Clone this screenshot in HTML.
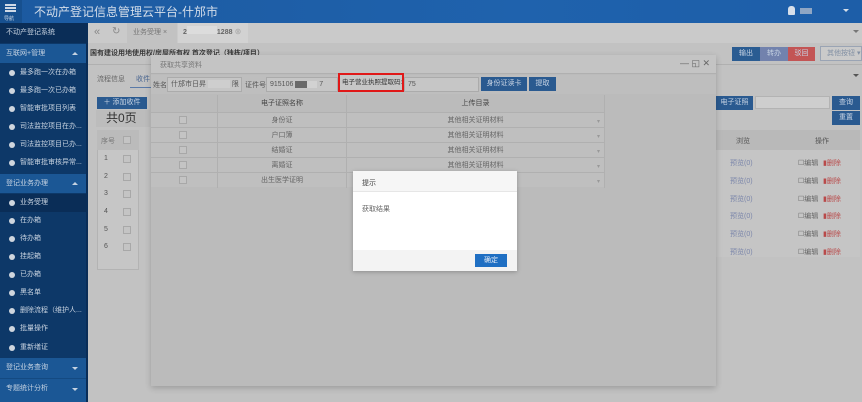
<!DOCTYPE html>
<html><head><meta charset="utf-8"><style>
*{margin:0;padding:0;box-sizing:border-box}
body{width:862px;height:402px;overflow:hidden;position:relative;background:#c2c2c2;font-family:"Liberation Sans","Noto Sans CJK SC",sans-serif;font-size:7px;color:#555}
.a{position:absolute;white-space:nowrap}
.side .it{position:absolute;left:0;width:86px;height:18px;line-height:18px;color:#c8d3e0;font-size:7px;padding-left:20px;white-space:nowrap;overflow:hidden}
.side .it:before{content:"";position:absolute;left:9px;top:6px;width:6px;height:6px;border-radius:50%;background:#cfd6de}
.side .grp{position:absolute;left:0;width:86px;height:19px;line-height:19px;background:#1b5795;color:#c6d3e2;padding-left:6px;font-size:7px}
.side .grp:after{content:"";position:absolute;right:8px;top:8px;border:3px solid transparent;border-bottom-color:#c6d3e2;border-top:0}
.side .grp.dn:after{border-bottom:0;border-top:3px solid #c6d3e2;top:9px}
.cell{position:absolute;border-right:1px solid #b0b0b0;border-bottom:1px solid #b0b0b0;text-align:center;line-height:15px;color:#666}
.cb{position:absolute;width:8px;height:8px;border:1px solid #a8a8a8;background:#c4c4c4}
.btn{position:absolute;color:#c8d4e4;text-align:center;font-size:7px;white-space:nowrap}
</style></head><body>
<div class="a" style="left:0;top:0;width:862px;height:23px;background:linear-gradient(90deg,#1c5aa0,#1f62ad 60%,#1d5ea8)"></div>
<div class="a" style="left:0;top:0;width:22px;height:23px;background:#17508f"></div>
<div class="a" style="left:5px;top:4px;width:11px;height:2px;background:#cfd9e6;box-shadow:0 3px 0 #cfd9e6,0 6px 0 #cfd9e6"></div>
<div class="a" style="left:4px;top:15px;font-size:5px;color:#cfd9e6">导航</div>
<div class="a" style="left:34px;top:3px;font-size:12px;color:#d5deea">不动产登记信息管理云平台-什邡市</div>
<div class="a" style="left:788px;top:6px;width:7px;height:9px;background:#d6dfea;border-radius:3px 3px 1px 1px"></div>
<div class="a" style="left:800px;top:8px;width:12px;height:6px;background:#8fa6c4"></div>
<div class="a" style="left:843px;top:9px;border:3px solid transparent;border-top-color:#d6dfea"></div>
<div class="side">
<div class="a" style="left:0;top:23px;width:86px;height:379px;background:#0d3868"></div>
<div class="a" style="left:0;top:23px;width:86px;height:20px;background:#0a2d57;color:#c8d3e0;line-height:20px;padding-left:6px">不动产登记系统</div>
<div class="grp" style="top:44px">互联网+管理</div>
<div class="it" style="top:64px">最多跑一次在办箱</div>
<div class="it" style="top:82px">最多跑一次已办箱</div>
<div class="it" style="top:100px">智能审批项目列表</div>
<div class="it" style="top:118px">司法监控项目在办...</div>
<div class="it" style="top:136px">司法监控项目已办...</div>
<div class="it" style="top:154px">智能审批审核异常...</div>
<div class="grp" style="top:174px">登记业务办理</div>
<div class="it" style="top:194px;background:#0a2d57">业务受理</div>
<div class="it" style="top:212px">在办箱</div>
<div class="it" style="top:230px">待办箱</div>
<div class="it" style="top:248px">挂起箱</div>
<div class="it" style="top:266px">已办箱</div>
<div class="it" style="top:284px">黑名单</div>
<div class="it" style="top:302px">删除流程（维护人...</div>
<div class="it" style="top:320px">批量操作</div>
<div class="it" style="top:339px">重新缮证</div>
<div class="grp dn" style="top:358px;height:20px">登记业务查询</div>
<div class="grp dn" style="top:378px;height:24px;border-top:1px solid #144a82">专题统计分析</div>
</div>
<div class="a" style="left:86px;top:23px;width:2px;height:379px;background:#0a2d57"></div>
<div class="a" style="left:88px;top:23px;width:774px;height:20px;background:#cacaca"></div>
<div class="a" style="left:94px;top:26px;font-size:11px;color:#888">«</div>
<div class="a" style="left:112px;top:26px;font-size:10px;color:#888">↻</div>
<div class="a" style="left:127px;top:23px;width:50px;height:20px;background:#c2c2c2;line-height:20px;padding-left:6px;color:#777">业务受理 ×</div>
<div class="a" style="left:178px;top:23px;width:70px;height:20px;background:#d2d2d2;line-height:20px;padding-left:5px;color:#666;font-weight:bold">2<span style="display:inline-block;width:30px;height:8px;background:#dcdcdc"></span>1288 <span style="color:#aaa">⊗</span></div>
<div class="a" style="left:853px;top:30px;border:3px solid transparent;border-top-color:#777"></div>
<div class="a" style="left:88px;top:43px;width:774px;height:359px;background:#c2c2c2"></div>
<div class="a" style="left:90px;top:48px;font-size:7px;color:#3a3a3a;font-weight:bold">国有建设用地使用权/房屋所有权 首次登记（独栋/项目）</div>
<div class="btn" style="left:732px;top:47px;width:28px;height:14px;line-height:14px;background:#2a5c92">输出</div>
<div class="btn" style="left:760px;top:47px;width:28px;height:14px;line-height:14px;background:#7282ad">转办</div>
<div class="btn" style="left:788px;top:47px;width:27px;height:14px;line-height:14px;background:#c35555">驳回</div>
<div class="a" style="left:820px;top:46px;width:42px;height:15px;border:1px solid #9aa4b4;background:#cacaca;color:#8290a4;line-height:13px;padding-left:6px">其他按钮 ▾</div>
<div class="a" style="left:88px;top:64px;width:774px;height:1px;background:#b0b0b0"></div>
<div class="a" style="left:97px;top:74px;color:#666">流程信息</div>
<div class="a" style="left:136px;top:74px;color:#4a6690">收件</div>
<div class="a" style="left:130px;top:87px;width:22px;height:1px;background:#5a7aa8"></div>
<div class="a" style="left:853px;top:74px;border:3px solid transparent;border-top-color:#555"></div>
<div class="btn" style="left:97px;top:97px;width:50px;height:12px;line-height:12px;background:#2a5a90">＋ 添加收件</div>
<div class="a" style="left:96px;top:110px;width:54px;height:17px;background:#bcbcbc;font-size:12px;color:#333;padding-left:10px;line-height:17px">共0页</div>
<div class="a" style="left:97px;top:130px;width:42px;height:140px;background:#c6c6c6;border:1px solid #b3b3b3"></div>
<div class="a" style="left:97px;top:130px;width:42px;height:20px;background:#bbbbbb"></div>
<div class="a" style="left:101px;top:136px;color:#777">序号</div><div class="cb" style="left:123px;top:136px"></div>
<div class="a" style="left:104px;top:155px">1</div><div class="cb" style="left:123px;top:155px"></div>
<div class="a" style="left:104px;top:173px">2</div><div class="cb" style="left:123px;top:173px"></div>
<div class="a" style="left:104px;top:190px">3</div><div class="cb" style="left:123px;top:190px"></div>
<div class="a" style="left:104px;top:208px">4</div><div class="cb" style="left:123px;top:208px"></div>
<div class="a" style="left:104px;top:226px">5</div><div class="cb" style="left:123px;top:226px"></div>
<div class="a" style="left:104px;top:243px">6</div><div class="cb" style="left:123px;top:243px"></div>
<div class="btn" style="left:716px;top:96px;width:37px;height:14px;line-height:14px;background:#2a5a90">电子证照</div>
<div class="a" style="left:755px;top:96px;width:75px;height:13px;background:#cecece;border:1px solid #b3b3b3"></div>
<div class="btn" style="left:832px;top:96px;width:28px;height:14px;line-height:14px;background:#2a5a90">查询</div>
<div class="btn" style="left:832px;top:111px;width:28px;height:14px;line-height:14px;background:#2a5a90">重置</div>
<div class="a" style="left:716px;top:130px;width:144px;height:20px;background:#b9b9b9"></div>
<div class="a" style="left:736px;top:136px;color:#555">浏览</div>
<div class="a" style="left:815px;top:136px;color:#555">操作</div>
<div class="a" style="left:716px;top:150px;width:144px;height:107px;background:#c5c5c5"></div>
<div class="a" style="left:730px;top:155px;line-height:17.8px;color:#7b86aa">预览(0)<br>预览(0)<br>预览(0)<br>预览(0)<br>预览(0)<br>预览(0)</div>
<div class="a" style="left:798px;top:155px;line-height:17.8px;color:#666">☐编辑<br>☐编辑<br>☐编辑<br>☐编辑<br>☐编辑<br>☐编辑</div>
<div class="a" style="left:823px;top:155px;line-height:17.8px;color:#b94a4a">▮删除<br>▮删除<br>▮删除<br>▮删除<br>▮删除<br>▮删除</div>
<div class="a" style="left:151px;top:55px;width:565px;height:331px;background:#bbbbbb;box-shadow:0 2px 6px rgba(0,0,0,.2)"></div>
<div class="a" style="left:151px;top:55px;width:565px;height:19px;background:#c4c4c4;border-bottom:1px solid #b0b0b0"></div>
<div class="a" style="left:160px;top:60px;color:#777">获取共享资料</div>
<div class="a" style="left:680px;top:58px;font-size:9px;color:#666">— ◱ ✕</div>
<div class="a" style="left:151px;top:75px;width:565px;height:19px;background:#bebebe"></div>
<div class="a" style="left:153px;top:80px;color:#555">姓名:</div>
<div class="a" style="left:167px;top:77px;width:75px;height:15px;background:#c6c6c6;border:1px solid #ababab;line-height:13px;padding-left:3px;color:#555">什邡市日昇 <span style="display:inline-block;width:22px;height:8px;background:#cecece;vertical-align:middle"></span> 限</div>
<div class="a" style="left:245px;top:80px;color:#555">证件号:</div>
<div class="a" style="left:266px;top:77px;width:72px;height:15px;background:#c6c6c6;border:1px solid #ababab;line-height:13px;padding-left:3px;color:#555">915106 <span style="display:inline-block;width:12px;height:7px;background:#6a6a6a;vertical-align:middle"></span><span style="display:inline-block;width:10px;height:7px;background:#d2d2d2;vertical-align:middle"></span> 7</div>
<div class="a" style="left:338px;top:73px;width:66px;height:19px;border:2px solid #e01818;background:#c6c6c6;line-height:15px;padding-left:2px;color:#333;font-size:6.5px;overflow:hidden">电子营业执照提取码:</div>
<div class="a" style="left:404px;top:77px;width:75px;height:15px;background:#c6c6c6;border:1px solid #ababab;line-height:13px;padding-left:3px;color:#555">75</div>
<div class="btn" style="left:481px;top:77px;width:46px;height:14px;line-height:14px;background:#2a5a90">身份证读卡</div>
<div class="btn" style="left:529px;top:77px;width:27px;height:14px;line-height:14px;background:#2a5a90">提取</div>
<div class="a" style="left:151px;top:95px;width:454px;height:92px;background:#bfbfbf"></div>
<div class="cell" style="left:151px;top:95px;width:67px;height:18px;background:#bbbbbb"></div>
<div class="cell" style="left:218px;top:95px;width:129px;height:18px;line-height:18px;background:#bbbbbb;color:#444">电子证照名称</div>
<div class="cell" style="left:347px;top:95px;width:258px;height:18px;line-height:18px;background:#bbbbbb;color:#444">上传目录</div>
<div class="cell" style="left:151px;top:113px;width:67px;height:15px"></div><div class="cell" style="left:218px;top:113px;width:129px;height:15px">身份证</div><div class="cell" style="left:347px;top:113px;width:258px;height:15px">其他相关证明材料</div>
<div class="cell" style="left:151px;top:128px;width:67px;height:15px"></div><div class="cell" style="left:218px;top:128px;width:129px;height:15px">户口簿</div><div class="cell" style="left:347px;top:128px;width:258px;height:15px">其他相关证明材料</div>
<div class="cell" style="left:151px;top:143px;width:67px;height:15px"></div><div class="cell" style="left:218px;top:143px;width:129px;height:15px">结婚证</div><div class="cell" style="left:347px;top:143px;width:258px;height:15px">其他相关证明材料</div>
<div class="cell" style="left:151px;top:158px;width:67px;height:15px"></div><div class="cell" style="left:218px;top:158px;width:129px;height:15px">离婚证</div><div class="cell" style="left:347px;top:158px;width:258px;height:15px">其他相关证明材料</div>
<div class="cell" style="left:151px;top:173px;width:67px;height:15px;border-bottom:0"></div><div class="cell" style="left:218px;top:173px;width:129px;height:15px;border-bottom:0">出生医学证明</div><div class="cell" style="left:347px;top:173px;width:258px;height:15px;border-bottom:0"></div>
<div class="cb" style="left:179px;top:116px"></div><div class="cb" style="left:179px;top:131px"></div><div class="cb" style="left:179px;top:146px"></div><div class="cb" style="left:179px;top:161px"></div><div class="cb" style="left:179px;top:176px"></div>
<div class="a" style="left:597px;top:115px;color:#999;line-height:15px;font-size:6px">▾<br>▾<br>▾<br>▾<br>▾</div>
<div class="a" style="left:353px;top:171px;width:164px;height:100px;background:#fff;box-shadow:0 1px 4px rgba(0,0,0,.25)"></div>
<div class="a" style="left:353px;top:171px;width:164px;height:21px;background:#f6f6f6;border-bottom:1px solid #e6e6e6"></div>
<div class="a" style="left:362px;top:178px;color:#444">提示</div>
<div class="a" style="left:362px;top:204px;color:#666">获取结果</div>
<div class="a" style="left:353px;top:250px;width:164px;height:21px;background:#f3f3f3"></div>
<div class="btn" style="left:475px;top:254px;width:32px;height:13px;line-height:13px;background:#1f6fc3;color:#e6eef8">确定</div>
</body></html>
